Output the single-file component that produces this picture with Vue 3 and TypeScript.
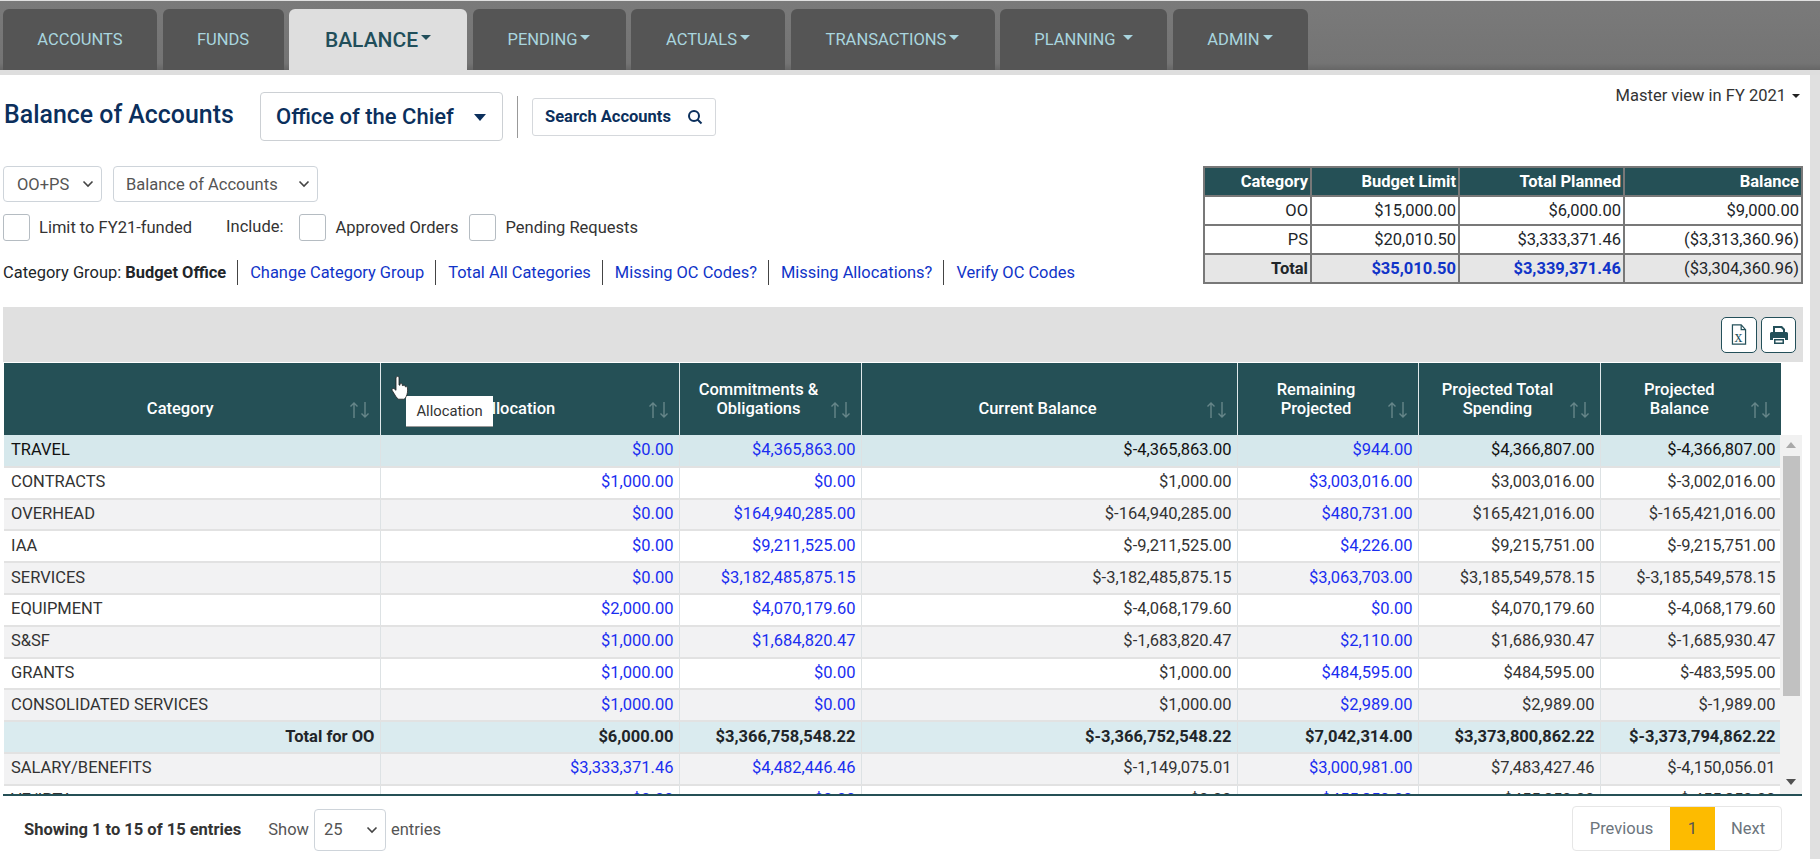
<script setup lang="ts">
interface Tab { label: string; caret: boolean; width: number; active?: boolean }
const tabs: Tab[] = [
  { label: 'ACCOUNTS', caret: false, width: 154 },
  { label: 'FUNDS', caret: false, width: 121 },
  { label: 'BALANCE', caret: true, width: 178, active: true },
  { label: 'PENDING', caret: true, width: 153 },
  { label: 'ACTUALS', caret: true, width: 154 },
  { label: 'TRANSACTIONS', caret: true, width: 204 },
  { label: 'PLANNING ', caret: true, width: 167 },
  { label: 'ADMIN', caret: true, width: 135 },
]
const links = ['Change Category Group', 'Total All Categories', 'Missing OC Codes?', 'Missing Allocations?', 'Verify OC Codes']
const summary = [
  ['OO', '$15,000.00', '$6,000.00', '$9,000.00'],
  ['PS', '$20,010.50', '$3,333,371.46', '($3,313,360.96)'],
]
const widths = [376, 299, 182, 376, 181, 182, 181]
const headers = ['Category', 'Allocation', 'Commitments &\nObligations', 'Current Balance', 'Remaining\nProjected', 'Projected Total\nSpending', 'Projected\nBalance']
type Row = string[]
const rows: Row[] = [
  ['TRAVEL', '$0.00', '$4,365,863.00', '$-4,365,863.00', '$944.00', '$4,366,807.00', '$-4,366,807.00'],
  ['CONTRACTS', '$1,000.00', '$0.00', '$1,000.00', '$3,003,016.00', '$3,003,016.00', '$-3,002,016.00'],
  ['OVERHEAD', '$0.00', '$164,940,285.00', '$-164,940,285.00', '$480,731.00', '$165,421,016.00', '$-165,421,016.00'],
  ['IAA', '$0.00', '$9,211,525.00', '$-9,211,525.00', '$4,226.00', '$9,215,751.00', '$-9,215,751.00'],
  ['SERVICES', '$0.00', '$3,182,485,875.15', '$-3,182,485,875.15', '$3,063,703.00', '$3,185,549,578.15', '$-3,185,549,578.15'],
  ['EQUIPMENT', '$2,000.00', '$4,070,179.60', '$-4,068,179.60', '$0.00', '$4,070,179.60', '$-4,068,179.60'],
  ['S&SF', '$1,000.00', '$1,684,820.47', '$-1,683,820.47', '$2,110.00', '$1,686,930.47', '$-1,685,930.47'],
  ['GRANTS', '$1,000.00', '$0.00', '$1,000.00', '$484,595.00', '$484,595.00', '$-483,595.00'],
  ['CONSOLIDATED SERVICES', '$1,000.00', '$0.00', '$1,000.00', '$2,989.00', '$2,989.00', '$-1,989.00'],
  ['Total for OO', '$6,000.00', '$3,366,758,548.22', '$-3,366,752,548.22', '$7,042,314.00', '$3,373,800,862.22', '$-3,373,794,862.22'],
  ['SALARY/BENEFITS', '$3,333,371.46', '$4,482,446.46', '$-1,149,075.01', '$3,000,981.00', '$7,483,427.46', '$-4,150,056.01'],
  ['VE/IPTA', '$0.00', '$0.00', '$0.00', '$455,850.00', '$455,850.00', '$-455,850.00'],
]
const isLink = (c: number) => c === 1 || c === 2 || c === 4
const rowClass = (i: number) => {
  if (i === 0) return 'r-hi'
  if (i === 9) return 'r-total'
  return i % 2 === 0 ? 'r-odd' : 'r-even'
}
</script>

<template>
  <div class="page">
    <nav class="nav">
      <a v-for="t in tabs" :key="t.label" class="tab" :class="{ active: t.active }" :style="{ width: t.width + 'px' }">
        {{ t.label }}<i v-if="t.caret" class="caret" />
      </a>
    </nav>
    <div class="nav-rule" />
    <main class="main">
      <div class="viewer">Master view in FY 2021<i class="caret dark small" /></div>
      <div class="head">
        <h1 class="title">Balance of Accounts</h1>
        <button class="office">Office of the Chief<i class="caret navy big" /></button>
        <span class="vr" />
        <button class="search">
          Search Accounts
          <svg width="16" height="16" viewBox="0 0 16 16" fill="none" stroke="#0b2f5c" stroke-width="2"><circle cx="7" cy="7" r="5" /><path d="M10.500 10.500 14.500 14.500" /></svg>
        </button>
      </div>
      <div class="mid">
        <div class="filters">
          <div class="selects">
            <div class="sel s1">OO+PS<svg class="chev" width="12" height="8" viewBox="0 0 12 8" fill="none" stroke="#444" stroke-width="1.6"><path d="M1.500 1.500 6 6l4.500-4.500" /></svg></div>
            <div class="sel s2">Balance of Accounts<svg class="chev" width="12" height="8" viewBox="0 0 12 8" fill="none" stroke="#444" stroke-width="1.6"><path d="M1.500 1.500 6 6l4.500-4.500" /></svg></div>
          </div>
          <div class="checks">
            <span class="box" /><span class="cl">Limit to FY21-funded</span>
            <span class="inc">Include:</span>
            <span class="box" /><span class="cl">Approved Orders</span>
            <span class="box b3" /><span class="cl">Pending Requests</span>
          </div>
          <div class="links">
            <span class="grp">Category Group: <b>Budget Office</b></span>
            <a v-for="l in links" :key="l" class="lnk">{{ l }}</a>
          </div>
        </div>
        <table class="sum">
          <thead><tr><th>Category</th><th>Budget Limit</th><th>Total Planned</th><th>Balance</th></tr></thead>
          <tbody>
            <tr v-for="r in summary" :key="r[0]"><td v-for="c in r" :key="c">{{ c }}</td></tr>
            <tr class="sum-total"><td><b>Total</b></td><td class="blue"><b>$35,010.50</b></td><td class="blue"><b>$3,339,371.46</b></td><td>($3,304,360.96)</td></tr>
          </tbody>
        </table>
      </div>
      <div class="toolbar">
        <button class="tool">
          <svg width="16" height="21" viewBox="0 0 18 24" fill="none" stroke="#24505a" stroke-width="1.4"><path d="M1.500 1h10l5 5.500V23h-15z" /><path d="M11.500 1v5.500h5" /><text x="3.800" y="20" font-size="18" font-family="Liberation Serif, serif" fill="#24505a" stroke="none">x</text></svg>
        </button>
        <button class="tool t2">
          <svg width="20" height="20" viewBox="0 0 20 20" fill="#24505a"><path d="M4 1h9l3 3v4H4zM6 3v4h8V5l-2-2z" fill-rule="evenodd" /><path d="M1 8.500Q1 7 2.500 7h15Q19 7 19 8.500V15h-3v-2H4v2H1z" /><path d="M5 14h10v5H5zM6.500 15.500v2h7v-2z" fill-rule="evenodd" /></svg>
        </button>
      </div>
      <div class="grid-wrap">
        <div class="grid-col">
          <table class="grid head-grid">
            <colgroup><col v-for="(w, i) in widths" :key="i" :style="{ width: w + 'px' }" /></colgroup>
            <thead>
              <tr>
                <th v-for="h in headers" :key="h">
                  <span class="hl">{{ h }}</span>
                  <span class="sort"><svg width="24" height="18" viewBox="0 0 24 18" fill="none" stroke="#668689" stroke-width="1.4"><path d="M6 17V2M2.500 5.500 6 2l3.500 3.500" /><path d="M17 1v15M13.500 12.500 17 16l3.500-3.500" /></svg></span>
                </th>
              </tr>
            </thead>
          </table>
          <div class="tip">Allocation</div>
          <svg class="hand" width="22" height="26" viewBox="0 0 22 26"><path d="M7 1.500c1.200-.6 2 .2 2 1.500v7l1 .2V8.800c1-.9 2-.5 2.200.7l.1 1 .8.200c.6-.9 1.800-.7 2.100.5l.1.700c1-.6 2-.2 2.200 1 .3 3 0 6-1.300 8.600-.5 1.200-1.100 2-2.500 2.700h-5c-1.300-.5-2-1.500-2.800-2.700L2.200 15.500c-.8-1.200.8-2.800 2-1.700L6 15.300V3c0-.8.300-1.200 1-1.500z" fill="#fff" stroke="#222" stroke-width=".8" /></svg>
        </div>
        <div class="body-row">
          <div class="body-clip">
            <table class="grid">
              <colgroup><col v-for="(w, i) in widths" :key="i" :style="{ width: w + 'px' }" /></colgroup>
              <tbody>
                <tr v-for="(r, i) in rows" :key="r[0]" :class="rowClass(i)">
                  <td v-for="(c, j) in r" :key="j" :class="{ first: j === 0, link: i !== 9 && isLink(j) }">{{ c }}</td>
                </tr>
              </tbody>
            </table>
          </div>
          <div class="scroll">
            <svg width="10" height="6" viewBox="0 0 10 6" class="up"><path d="M0 6 5 0l5 6z" fill="#a9a9a9" /></svg>
            <div class="thumb" />
            <svg width="10" height="6" viewBox="0 0 10 6" class="down"><path d="M0 0h10L5 6z" fill="#505050" /></svg>
          </div>
        </div>
      </div>
      <div class="foot">
        <b class="showing">Showing 1 to 15 of 15 entries</b>
        <span class="show">Show</span>
        <div class="sel s3">25<svg class="chev" width="12" height="8" viewBox="0 0 12 8" fill="none" stroke="#444" stroke-width="1.6"><path d="M1.500 1.500 6 6l4.500-4.500" /></svg></div>
        <span class="show">entries</span>
        <div class="pager"><span class="pg">Previous</span><span class="pg cur">1</span><span class="pg">Next</span></div>
      </div>
    </main>
  </div>
</template>

<style>
html, body { margin: 0; background: #e0e0e0; overflow: hidden; }
</style>

<style scoped>
.page { width: 1820px; height: 859px; padding-top: 1px; box-sizing: border-box; font-family: Roboto, "Liberation Sans", sans-serif; font-size: 16.500px; color: #212529; overflow: hidden; }
.nav { display: flex; gap: 5.500px; height: 69px; padding: 8px 0 0 3px; box-sizing: border-box; background: linear-gradient(#7a7a7a, #747474 90%, #666); }
.tab { height: 61px; box-sizing: border-box; display: flex; align-items: center; justify-content: center; background: #555; color: #a9d5df; border-radius: 6px 6px 0 0; font-size: 16.500px; white-space: pre; }
.tab.active { background: #dedede; color: #214e5a; font-size: 21px; font-weight: 500; }
.nav-rule { height: 5px; background: #dedede; }
.caret { display: inline-block; margin-left: 3px; border-top: 5px solid #a9d5df; border-left: 5px solid transparent; border-right: 5px solid transparent; position: relative; top: -2px; }
.tab.active .caret { border-top-color: #214e5a; }
.caret.dark { border-top-color: #222; border-left-width: 4px; border-right-width: 4px; border-top-width: 4px; margin-left: 6px; top: -3px; }
.caret.navy { border-top: 7px solid #0b2f5c; border-left-width: 6px; border-right-width: 6px; margin-left: 20px; top: -3px; }
.main { width: 1810px; height: 784px; background: #fff; position: relative; overflow: hidden; }
.viewer { position: absolute; top: 11px; right: 10px; font-size: 16.500px; color: #333; }
.head { display: flex; align-items: center; height: 49px; padding-top: 17px; }
.title { margin: 0 0 0 4px; width: 256px; font-size: 24.900px; font-weight: 500; color: #0b2f5c; line-height: 1; position: relative; top: -1px; }
.office { width: 243px; height: 49px; background: #fff; border: 1px solid #ccd0d4; border-radius: 4px; font: 500 22px Roboto, sans-serif; color: #0b2f5c; text-align: left; padding: 0 0 0 15px; }
.vr { width: 1px; height: 42px; background: #999; margin: 0 14px; }
.search { width: 184px; height: 38px; background: #fff; border: 1px solid #d5d8dc; border-radius: 3px; display: flex; align-items: center; justify-content: space-between; padding: 0 12px; box-sizing: border-box; font: 700 16.500px Roboto, sans-serif; color: #0b2f5c; }
.mid { display: flex; justify-content: space-between; padding-top: 25px; height: 166px; box-sizing: border-box; padding-left: 3px; padding-right: 7px; }
.filters { display: flex; flex-direction: column; }
.selects { display: flex; gap: 11px; }
.sel { display: flex; align-items: center; justify-content: space-between; border: 1px solid #ced4da; border-radius: 4px; color: #555; box-sizing: border-box; background: #fff; font-size: 16.500px; }
.s1 { width: 99px; height: 36px; padding: 0 7px 0 13px; }
.s2 { width: 205px; height: 36px; padding: 0 7px 0 12px; }
.s3 { width: 72px; height: 42px; padding: 0 7px 0 9px; margin: 0 5px 0 5px; }
.checks { display: flex; align-items: center; margin-top: 11px; height: 28px; }
.box { width: 27px; height: 27px; border: 1px solid #b5bcc2; border-radius: 3px; box-sizing: border-box; display: inline-block; }
.b3 { margin-left: 11px; }
.cl { margin-left: 9px; color: #333; }
.inc { margin: 0 16px 0 34px; color: #333; position: relative; top: -1px; }
.links { display: flex; align-items: center; margin-top: 19px; height: 25px; font-size: 16.450px; }
.grp { padding-right: 11px; }
.lnk { color: #1034c8; padding: 3px 11px 3px 12px; border-left: 1px solid #444; line-height: 19px; }
.sum { border-collapse: collapse; width: 600px; table-layout: fixed; font-size: 16.500px; align-self: flex-start; }
.sum tr { height: 29px; }
.sum th, .sum td { border: 2px solid #787878; padding: 0 2px; text-align: right; box-sizing: border-box; line-height: 20px; }
.sum th { background: #255056; color: #fff; font-weight: 700; }
.sum th:nth-child(1) { width: 107px; }
.sum th:nth-child(2) { width: 148px; }
.sum th:nth-child(3) { width: 165px; }
.sum-total td { background: #e6e6e6; }
.blue { color: #1034c8; }
.toolbar { display: flex; justify-content: flex-end; gap: 4px; align-items: center; height: 55px; margin: 0 7px 0 3px; padding-right: 7px; background: #e0e0e0; box-sizing: border-box; }
.tool { width: 36px; height: 36px; border: 1px solid #24505a; border-radius: 5px; background: #fff; display: flex; align-items: center; justify-content: center; padding: 0; }
.t2 { width: 35px; }
.grid-wrap { margin: 1px 7px 0 4px; width: 1799px; }
.grid-col { position: relative; width: 1777px; }
.grid { border-collapse: collapse; table-layout: fixed; width: 1777px; font-size: 16.500px; }
.head-grid th { height: 72px; background: #255056; color: #fff; font-weight: 500; border-right: 1.500px solid #dfe8ea; padding: 0 28px 17px 5px; position: relative; box-sizing: border-box; line-height: 19px; vertical-align: bottom; }
.head-grid th:last-child { border-right: none; }
.hl { white-space: pre-line; display: block; }
.sort { position: absolute; right: 8px; bottom: 16px; line-height: 0; }
.tip { position: absolute; left: 402px; top: 33px; width: 87px; height: 31px; background: #fff; border-bottom: 1px solid #999; color: #333; font-size: 14.800px; line-height: 31px; text-align: center; box-sizing: border-box; }
.hand { position: absolute; left: 386px; top: 12px; }
.body-row { display: flex; height: 361px; border-bottom: 2px solid #255056; box-sizing: border-box; width: 1799px; margin-left: -1px; padding-left: 1px; }
.body-clip { width: 1777px; overflow: hidden; }
.grid td { height: 31.800px; box-sizing: border-box; padding: 0 5px 2px; text-align: right; border-right: 1px solid #dde2e4; border-bottom: 2px solid #e2e2e2; white-space: nowrap; }
.grid td.first { text-align: left; padding-left: 7px; }
.grid td.link { color: #1a2ef0; }
.r-hi td { background: #d6e8ec; color: #111; }
.r-even td { background: #fff; color: #333; }
.r-odd td { background: #f2f2f3; color: #333; }
.r-total td { background: #daebef; font-weight: 700; }
.r-total td.first { text-align: right; padding-left: 5px; }
.scroll { width: 22px; background: #f1f1f1; position: relative; display: flex; flex-direction: column; align-items: center; }
.up { margin-top: 7px; }
.thumb { width: 17px; height: 240px; background: #c1c1c1; margin-top: 8px; }
.down { position: absolute; bottom: 9px; }
.foot { display: flex; align-items: center; height: 63px; padding: 4px 28px 0 24px; box-sizing: border-box; position: relative; }
.showing { margin-right: 27px; color: #333; }
.show { color: #555; }
.pager { margin-left: auto; display: flex; height: 45px; width: 210px; border: 1px solid #e6e6e6; border-radius: 4px; box-sizing: border-box; position: relative; top: -1px; }
.pg { display: flex; align-items: center; justify-content: center; flex: 0 0 auto; color: #6c757d; }
.pg:first-child { width: 97px; box-sizing: border-box; }
.pg:last-child { flex: 1; }
.cur { width: 45px; background: #fdbb00; color: #555; box-sizing: border-box; }
</style>
